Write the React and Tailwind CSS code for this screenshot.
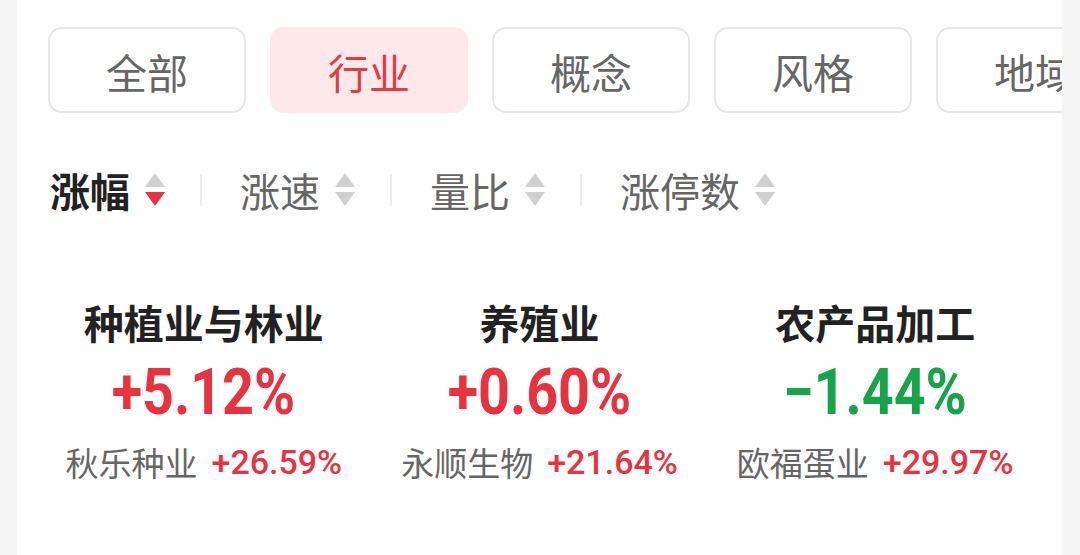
import React from 'react';

const tabs = ['全部', '行业', '概念', '风格', '地域'];
const sorts = ['涨幅', '涨速', '量比', '涨停数'];
const cards = [
  { name: '种植业与林业', pct: '+5.12%', up: true, stock: '秋乐种业', stockPct: '+26.59%' },
  { name: '养殖业', pct: '+0.60%', up: true, stock: '永顺生物', stockPct: '+21.64%' },
  { name: '农产品加工', pct: '−1.44%', up: false, stock: '欧福蛋业', stockPct: '+29.97%' },
];

const cjk = { fontFamily: '"Noto Sans CJK SC", "Noto Sans", sans-serif' };
const num = { fontFamily: 'Roboto, "Noto Sans", sans-serif' };

const SortArrows = ({ active }) => (
  <svg width="20" height="36" viewBox="0 0 20 36" className="shrink-0">
    <polygon points="10,1 20,15 0,15" fill="#d0d0d0" />
    <polygon points="0,20 20,20 10,34" fill={active ? '#e8323f' : '#d0d0d0'} />
  </svg>
);

export default function App() {
  return (
    <div className="w-[1080px] h-[555px] bg-[#f5f5f5] flex overflow-hidden" style={cjk}>
      <div className="ml-[17px] w-[1045px] h-full bg-white overflow-hidden flex flex-col">
        {/* Tabs */}
        <div className="flex gap-[24px] pl-[31px] pt-[27px]">
          {tabs.map((t, i) => (
            <div
              key={t}
              className={`shrink-0 w-[198px] h-[86px] rounded-[14px] flex items-center justify-center text-[41px] leading-none ${
                i === 1
                  ? 'bg-[#fde8ea] text-[#e33a44]'
                  : 'border-2 border-[#e8e8e8] text-[#666666]'
              }`}
            >
              <span className="pt-[2px]">{t}</span>
            </div>
          ))}
        </div>

        {/* Sort row */}
        <div className="flex items-center pl-[33px] mt-[51px] h-[52px]">
          {sorts.map((s, i) => (
            <React.Fragment key={s}>
              {i > 0 && <div className="w-[2px] h-[32px] bg-[#ececec] ml-[35px] mr-[38px]" />}
              <div className="flex items-center gap-[15px]">
                <span
                  className={`text-[40px] leading-none ${
                    i === 0 ? 'font-bold text-[#222222]' : 'text-[#666666]'
                  }`}
                >
                  {s}
                </span>
                <SortArrows active={i === 0} />
              </div>
            </React.Fragment>
          ))}
        </div>

        {/* Cards */}
        <div className="grid grid-cols-3 px-[19px] mt-[82px]">
          {cards.map((c) => (
            <div key={c.name} className="flex flex-col items-center">
              <div className="text-[40px] leading-[48px] font-bold text-[#222222]">{c.name}</div>
              <div
                className={`text-[64px] leading-[70px] font-bold mt-[12px] scale-x-[0.87] ${
                  c.up ? 'text-[#e8323f]' : 'text-[#17a349]'
                }`}
                style={num}
              >
                {c.pct}
              </div>
              <div className="flex items-center gap-[14px] mt-[14px] h-[40px]">
                <span className="text-[33px] text-[#666666] leading-none">{c.stock}</span>
                <span className="text-[34px] font-medium text-[#e8323f] leading-none" style={num}>
                  {c.stockPct}
                </span>
              </div>
            </div>
          ))}
        </div>
      </div>
      <div className="flex-1" />
    </div>
  );
}
